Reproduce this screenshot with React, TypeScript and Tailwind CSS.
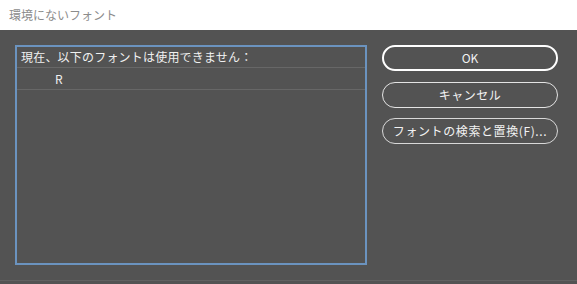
const font = { fontFamily: '"Noto Sans CJK JP", "Noto Sans", sans-serif' }

export default function App() {
  return (
    <div className="w-[577px] h-[284px] flex flex-col overflow-hidden" style={font}>
      {/* Title bar */}
      <div className="h-[30px] shrink-0 bg-white flex items-center px-[9px] text-[12px] text-[#8c8c8c]">
        環境にないフォント
      </div>

      {/* Body */}
      <div className="flex-1 bg-[#535353] flex flex-col">
        <div className="flex pt-[15px] pl-[15px]">
          <div className="w-[352px] h-[220px] border-2 border-[#6b93bf] flex flex-col">
            <div className="h-[21px] border-b border-[#676767] flex items-center pl-[4px] text-[12px] tracking-[0.2px] text-[#f0f0f0]">
              現在、以下のフォントは使用できません：
            </div>
            <div className="h-[22px] border-b border-[#676767] flex items-center pl-[38px] text-[12px] text-[#f0f0f0]">
              R
            </div>
          </div>

          <div className="ml-[15px] w-[176px] flex flex-col text-[12px] text-[#f2f2f2]">
            <button className="h-[26px] rounded-full border-2 border-white flex items-center justify-center">
              OK
            </button>
            <button className="mt-[11px] h-[26px] rounded-full border-[1.5px] border-[#e4e4e4] flex items-center justify-center tracking-[0.5px]">
              キャンセル
            </button>
            <button className="mt-[10px] h-[26px] rounded-full border border-[#d8d8d8] flex items-center justify-center tracking-[0.6px]">
              フォントの検索と置換(F)...
            </button>
          </div>
        </div>

        <div className="mt-auto mb-[3px] h-px bg-[#616161]" />
      </div>
    </div>
  )
}
